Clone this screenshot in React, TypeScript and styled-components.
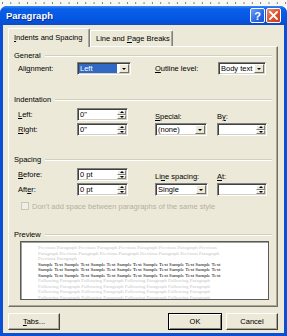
import React from "react";
import styled, { createGlobalStyle } from "styled-components";

const GlobalStyle = createGlobalStyle`
  html, body { margin: 0; padding: 0; }
  body {
    width: 287px;
    height: 336px;
    overflow: hidden;
    background: #fff;
    font-family: "Liberation Sans", Arial, sans-serif;
  }
`;

// 미리보기 문단
const previous = [
  "Previous Paragraph Previous Paragraph Previous Paragraph Previous Paragraph Previous",
  "Paragraph Previous Paragraph Previous Paragraph Previous Paragraph Previous Paragraph",
  "Previous Paragraph",
];
const sample = Array(3).fill(Array(7).fill("Sample Text").join(" "));
const following = Array(4).fill(Array(4).fill("Following Paragraph").join(" "));

const Combo = ({ value, width, selected }: { value: string; width: number; selected?: boolean }) => (
  <Style_field $w={width}>
    <Style_fieldText $selected={selected}>{value}</Style_fieldText>
    <Style_dropBtn>
      <Style_arrow $dir="down" />
    </Style_dropBtn>
  </Style_field>
);

const Spinner = ({ value, width }: { value: string; width: number }) => (
  <Style_field $w={width}>
    <Style_fieldText>{value}</Style_fieldText>
    <Style_spin>
      <Style_spinHalf><Style_arrow $dir="up" /></Style_spinHalf>
      <Style_spinHalf><Style_arrow $dir="down" /></Style_spinHalf>
    </Style_spin>
  </Style_field>
);

const Group = ({ title, children }: { title: string; children?: React.ReactNode }) => (
  <Style_group>
    <Style_groupHead>
      <span>{title}</span>
      <Style_groupLine />
    </Style_groupHead>
    {children}
  </Style_group>
);

export default function App() {
  return (
    <>
      <GlobalStyle />
      <Style_screen>
        <Style_ruler />
        <Style_window>
          <Style_titleBar>
            <Style_title>Paragraph</Style_title>
            <Style_titleBtns>
              <Style_helpBtn>?</Style_helpBtn>
              <Style_closeBtn>
                <svg width="9" height="9" viewBox="0 0 9 9">
                  <path d="M1 1 L8 8 M8 1 L1 8" stroke="#fff" strokeWidth="1.8" strokeLinecap="square" />
                </svg>
              </Style_closeBtn>
            </Style_titleBtns>
          </Style_titleBar>

          <Style_body>
            <Style_tabs>
              <Style_tab $active>
                <span><u>I</u>ndents and Spacing</span>
              </Style_tab>
              <Style_tab>
                <span>Line and <u>P</u>age Breaks</span>
              </Style_tab>
            </Style_tabs>

            <Style_panel>
              <Group title="General">
                <Style_row $top={2}>
                  <Style_col>
                    <Style_fieldRow>
                      <Style_label $w={59}>Ali<u>g</u>nment:</Style_label>
                      <Combo value="Left" width={54} selected />
                    </Style_fieldRow>
                  </Style_col>
                  <Style_fieldRow>
                    <Style_label $w={63}><u>O</u>utline level:</Style_label>
                    <Combo value="Body text" width={48} />
                  </Style_fieldRow>
                </Style_row>
              </Group>

              <Style_spacer $h={20} />

              <Group title="Indentation">
                <Style_row $top={4}>
                  <Style_col>
                    <Style_fieldRow>
                      <Style_label $w={59}><u>L</u>eft:</Style_label>
                      <Spinner value={'0"'} width={51} />
                    </Style_fieldRow>
                    <Style_fieldRow>
                      <Style_label $w={59}><u>R</u>ight:</Style_label>
                      <Spinner value={'0"'} width={51} />
                    </Style_fieldRow>
                  </Style_col>
                  <Style_pairGrid>
                    <Style_topLabel><u>S</u>pecial:</Style_topLabel>
                    <Style_topLabel>B<u>y</u>:</Style_topLabel>
                    <Combo value="(none)" width={52} />
                    <Spinner value="" width={50} />
                  </Style_pairGrid>
                </Style_row>
              </Group>

              <Style_spacer $h={19} />

              <Group title="Spacing">
                <Style_row $top={4}>
                  <Style_col>
                    <Style_fieldRow>
                      <Style_label $w={59}><u>B</u>efore:</Style_label>
                      <Spinner value="0 pt" width={51} />
                    </Style_fieldRow>
                    <Style_fieldRow>
                      <Style_label $w={59}>Aft<u>e</u>r:</Style_label>
                      <Spinner value="0 pt" width={51} />
                    </Style_fieldRow>
                  </Style_col>
                  <Style_pairGrid>
                    <Style_topLabel>Li<u>n</u>e spacing:</Style_topLabel>
                    <Style_topLabel><u>A</u>t:</Style_topLabel>
                    <Combo value="Single" width={53} />
                    <Spinner value="" width={50} />
                  </Style_pairGrid>
                </Style_row>
                <Style_check>
                  <Style_checkBox />
                  <span>Don't add space between paragraphs of the same style</span>
                </Style_check>
              </Group>

              <Style_spacer $h={19} />

              <Group title="Preview">
                <Style_preview>
                  {previous.map((t, i) => (
                    <Style_previewLine key={"p" + i} $dim>{t}</Style_previewLine>
                  ))}
                  {sample.map((t, i) => (
                    <Style_previewLine key={"s" + i}>{t}</Style_previewLine>
                  ))}
                  {following.map((t, i) => (
                    <Style_previewLine key={"f" + i} $dim>{t}</Style_previewLine>
                  ))}
                </Style_preview>
              </Group>
            </Style_panel>

            <Style_buttons>
              <Style_button $w={52}><span><u>T</u>abs...</span></Style_button>
              <Style_grow />
              <Style_button $w={54} $default>OK</Style_button>
              <Style_button $w={52}>Cancel</Style_button>
            </Style_buttons>
          </Style_body>
        </Style_window>
      </Style_screen>
    </>
  );
}

const Style_screen = styled.div`
  width: 287px;
  height: 336px;
  display: flex;
  flex-direction: column;
  background: #fff;
`;

const Style_ruler = styled.div`
  height: 6px;
  flex-shrink: 0;
  background:
    linear-gradient(to right, #7a7a7a 1px, transparent 1px) 2px 2px / 8.33px 2px repeat-x,
    #f7f7f4;
`;

const Style_window = styled.div`
  flex: 1;
  display: flex;
  flex-direction: column;
  background: #0a4fd6;
  border-radius: 7px 7px 0 0;
  overflow: hidden;
`;

const Style_titleBar = styled.div`
  height: 19px;
  flex-shrink: 0;
  display: flex;
  align-items: center;
  padding: 0 6px 0 6px;
  background: linear-gradient(to bottom, #3c8cf8 0%, #0b5fe6 15%, #0458e6 60%, #0a4ccc 100%);
`;

const Style_title = styled.span`
  color: #fff;
  font-weight: bold;
  font-size: 9.5px;
  text-shadow: 1px 1px 0 #0a2f8a;
  flex: 1;
`;

const Style_titleBtns = styled.div`
  display: flex;
  gap: 1px;
`;

const Style_helpBtn = styled.div`
  width: 15px;
  height: 15px;
  box-sizing: border-box;
  border: 1px solid #fff;
  border-radius: 2px;
  background: linear-gradient(135deg, #6ea2f8, #2a66e4 60%, #1b52d0);
  color: #fff;
  font-weight: bold;
  font-size: 11px;
  display: flex;
  align-items: center;
  justify-content: center;
`;

const Style_closeBtn = styled(Style_helpBtn)`
  background: linear-gradient(135deg, #f08a6a, #e0502a 55%, #c83a18);
`;

const Style_body = styled.div`
  flex: 1;
  display: flex;
  flex-direction: column;
  margin: 0 3px 3px;
  padding: 3px 6px 3px 5px;
  background: #ece9d8;
  font-size: 7.5px;
  color: #000;
`;

const Style_tabs = styled.div`
  height: 18px;
  display: flex;
  align-items: flex-end;
`;

const Style_tab = styled.div<{ $active?: boolean }>`
  box-sizing: border-box;
  height: ${({ $active }) => ($active ? 19 : 16)}px;
  padding: 0 0 ${({ $active }) => ($active ? 1 : 0)}px 5px;
  width: ${({ $active }) => ($active ? 82 : 83)}px;
  display: flex;
  align-items: center;
  background: #ece9d8;
  border-top: 1px solid #fff;
  border-left: 1px solid #fff;
  border-right: 1px solid #808080;
  box-shadow: inset -1px 0 #aca899;
  border-radius: 2px 2px 0 0;
  margin-bottom: ${({ $active }) => ($active ? -1 : 0)}px;
  position: relative;
  z-index: ${({ $active }) => ($active ? 1 : 0)};
`;

const Style_panel = styled.div`
  height: 261px;
  box-sizing: border-box;
  display: flex;
  flex-direction: column;
  padding: 4px 5px 0 5px;
  border-top: 1px solid #fff;
  border-left: 1px solid #fff;
  border-right: 1px solid #716f64;
  border-bottom: 1px solid #716f64;
  box-shadow: inset -1px -1px #aca899;
`;

const Style_group = styled.div`
  display: flex;
  flex-direction: column;
`;

const Style_groupHead = styled.div`
  height: 9px;
  line-height: 9px;
  display: flex;
  align-items: center;
  gap: 4px;
`;

const Style_groupLine = styled.div`
  flex: 1;
  height: 1px;
  background: #d0d0bf;
  border-bottom: 1px solid #fff;
`;

const Style_spacer = styled.div<{ $h: number }>`
  height: ${({ $h }) => $h}px;
  flex-shrink: 0;
`;

const Style_row = styled.div<{ $top: number }>`
  display: grid;
  grid-template-columns: 137px auto;
  margin-top: ${({ $top }) => $top}px;
  padding-left: 4px;
`;

const Style_col = styled.div`
  display: flex;
  flex-direction: column;
  gap: 2px;
`;

const Style_fieldRow = styled.div`
  display: flex;
  align-items: center;
  height: 13px;
`;

const Style_label = styled.span<{ $w: number }>`
  width: ${({ $w }) => $w}px;
  flex-shrink: 0;
  line-height: 13px;
`;

const Style_pairGrid = styled.div`
  display: grid;
  grid-template-columns: 62px 50px;
  grid-template-rows: 13px 13px;
  row-gap: 2px;
`;

const Style_topLabel = styled.span`
  align-self: end;
  line-height: 9px;
`;

const Style_field = styled.div<{ $w: number }>`
  width: ${({ $w }) => $w}px;
  height: 13px;
  box-sizing: border-box;
  display: flex;
  background: #fff;
  border-top: 1px solid #808080;
  border-left: 1px solid #808080;
  border-right: 1px solid #fff;
  border-bottom: 1px solid #fff;
  box-shadow: inset 1px 1px #404040, inset -1px -1px #d4d0c8;
  padding: 1px;
`;

const Style_fieldText = styled.span<{ $selected?: boolean }>`
  flex: 1;
  line-height: 9px;
  padding-left: 1px;
  margin-right: ${({ $selected }) => ($selected ? 2 : 0)}px;
  background: ${({ $selected }) => ($selected ? "#316ac5" : "transparent")};
  color: ${({ $selected }) => ($selected ? "#fff" : "#000")};
  white-space: nowrap;
  overflow: hidden;
`;

const Style_dropBtn = styled.div`
  width: 10px;
  box-sizing: border-box;
  background: #ece9d8;
  border-top: 1px solid #fff;
  border-left: 1px solid #fff;
  border-right: 1px solid #716f64;
  border-bottom: 1px solid #716f64;
  display: flex;
  align-items: center;
  justify-content: center;
`;

const Style_spin = styled.div`
  width: 9px;
  display: flex;
  flex-direction: column;
  background: #ece9d8;
`;

const Style_spinHalf = styled.div`
  flex: 1;
  box-sizing: border-box;
  border-top: 1px solid #fff;
  border-left: 1px solid #fff;
  border-right: 1px solid #808080;
  border-bottom: 1px solid #808080;
  display: flex;
  align-items: center;
  justify-content: center;
`;

const Style_arrow = styled.span<{ $dir: "up" | "down" }>`
  width: 0;
  height: 0;
  border-left: 2px solid transparent;
  border-right: 2px solid transparent;
  ${({ $dir }) =>
    $dir === "down" ? "border-top: 2px solid #000;" : "border-bottom: 2px solid #000;"}
`;

const Style_check = styled.div`
  display: flex;
  align-items: center;
  gap: 3px;
  height: 10px;
  margin-top: 5px;
  padding-left: 7px;
  color: #b4b09f;
`;

const Style_checkBox = styled.div`
  width: 8px;
  height: 8px;
  box-sizing: border-box;
  border: 1px solid #cac8bb;
  background: #f0efe6;
`;

const Style_preview = styled.div`
  margin: 2px 0 0 6px;
  width: 249px;
  height: 59px;
  box-sizing: border-box;
  overflow: hidden;
  background: #fff;
  border: 1px solid #5a5a5a;
  box-shadow: inset 1px 1px #a0a0a0;
  padding: 3px 0 0 17px;
  font-family: "Liberation Serif", "Times New Roman", serif;
  font-size: 5px;
`;

const Style_previewLine = styled.div<{ $dim?: boolean }>`
  height: 5.5px;
  line-height: 5.5px;
  white-space: nowrap;
  color: ${({ $dim }) => ($dim ? "#c4c4c4" : "#000")};
`;

const Style_buttons = styled.div`
  margin-top: 6px;
  display: flex;
  gap: 4px;
`;

const Style_grow = styled.div`
  flex: 1;
`;

const Style_button = styled.div<{ $w: number; $default?: boolean }>`
  width: ${({ $w }) => $w}px;
  height: 17px;
  box-sizing: border-box;
  display: flex;
  align-items: center;
  justify-content: center;
  background: #ece9d8;
  border-top: 1px solid #fff;
  border-left: 1px solid #fff;
  border-right: 1px solid #404040;
  border-bottom: 1px solid #404040;
  box-shadow: inset -1px -1px #aca899;
  ${({ $default }) =>
    $default &&
    "border: 1px solid #000; box-shadow: inset 1px 1px #fff, inset -1px -1px #808080;"}
`;
